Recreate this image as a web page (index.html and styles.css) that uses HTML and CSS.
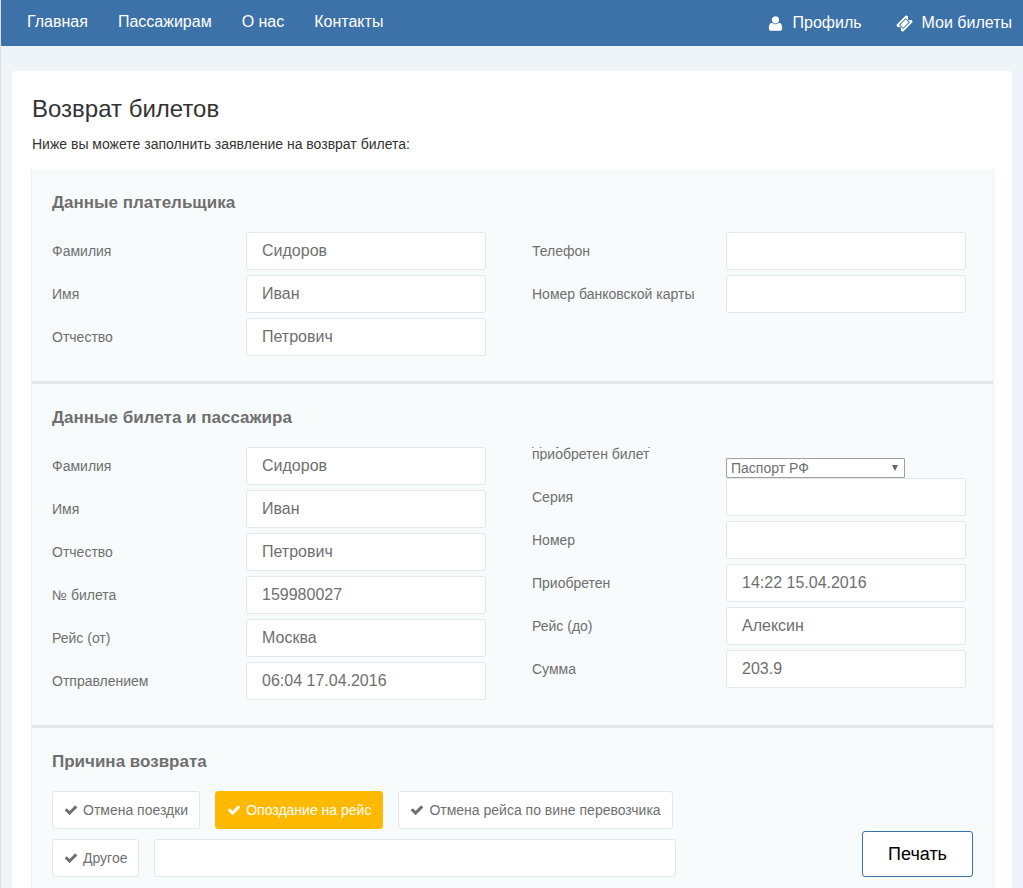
FILE: index.html
```html
<!DOCTYPE html>
<html lang="ru">
<head>
    <meta charset="UTF-8">
    <title>Возврат билетов</title>
    <link rel="stylesheet" href="styles.css">
</head>
<body>
    <!-- Иконки -->
    <svg class="sprite" aria-hidden="true">
        <symbol id="icon-check" viewBox="0 0 1792 1792">
            <path d="M1671 566q0 40-28 68l-724 724-136 136q-28 28-68 28t-68-28l-136-136-362-362q-28-28-28-68t28-68l136-136q28-28 68-28t68 28l294 295 656-657q28-28 68-28t68 28l136 136q28 28 28 68z"/>
        </symbol>
        <symbol id="icon-user" viewBox="0 0 1792 1792">
            <path d="M1600 1405q0 120-73 189.500t-194 69.500h-874q-121 0-194-69.500t-73-189.500q0-53 3.500-103.500t14-109 26.500-108.500 43-97.500 62-81 85.500-53.500 111.500-20q9 0 42 21.500t74.500 48 108 48 133.500 21.500 133.500-21.500 108-48 74.500-48 42-21.500q61 0 111.500 20t85.500 53.500 62 81 43 97.500 26.500 108.500 14 109 3.500 103.500zm-320-893q0 159-112.500 271.500t-271.500 112.500-271.500-112.500-112.500-271.500 112.500-271.500 271.500-112.500 271.500 112.500 112.500 271.500z"/>
        </symbol>
        <symbol id="icon-ticket" viewBox="0 0 1792 1792">
            <path d="M1024 452l316 316-572 572-316-316zm-211 979l618-618q19-19 19-45t-19-45l-362-362q-18-18-45-18t-45 18l-618 618q-19 19-19 45t19 45l362 362q18 18 45 18t45-18zm889-637l-907 908q-37 37-90.5 37t-90.5-37l-126-126q56-56 56-136t-56-136-136-56-136 56l-125-126q-37-37-37-90.5t37-90.500l907-906q37-37 90.500-37t90.500 37l125 125q-56 56-56 136t56 136 136 56 136-56l126 125q37 37 37 90.500t-37 90.500z"/>
        </symbol>
    </svg>

    <!-- Шапка -->
    <header class="header">
        <nav class="menu">
            <a href="#">Главная</a>
            <a href="#">Пассажирам</a>
            <a href="#">О нас</a>
            <a href="#">Контакты</a>
        </nav>
        <nav class="user-menu">
            <a href="#"><svg class="icon"><use href="#icon-user"/></svg>Профиль</a>
            <a href="#"><svg class="icon"><use href="#icon-ticket"/></svg>Мои билеты</a>
        </nav>
    </header>

    <main class="card">
        <h1>Возврат билетов</h1>
        <p class="hint">Ниже вы можете заполнить заявление на возврат билета:</p>

        <form class="panel">
            <!-- Плательщик -->
            <section class="section">
                <h2>Данные плательщика</h2>
                <div class="fields">
                    <div class="column">
                        <div class="row"><label for="payerSurname">Фамилия</label><input type="text" id="payerSurname" value="Сидоров"></div>
                        <div class="row"><label for="payerName">Имя</label><input type="text" id="payerName" value="Иван"></div>
                        <div class="row"><label for="payerPatronymic">Отчество</label><input type="text" id="payerPatronymic" value="Петрович"></div>
                    </div>
                    <div class="column">
                        <div class="row"><label for="phone">Телефон</label><input type="text" id="phone"></div>
                        <div class="row"><label for="bankCard">Номер банковской карты</label><input type="text" id="bankCard"></div>
                    </div>
                </div>
            </section>

            <!-- Билет и пассажир -->
            <section class="section">
                <h2>Данные билета и пассажира</h2>
                <div class="fields">
                    <div class="column">
                        <div class="row"><label for="surname">Фамилия</label><input type="text" id="surname" value="Сидоров"></div>
                        <div class="row"><label for="name">Имя</label><input type="text" id="name" value="Иван"></div>
                        <div class="row"><label for="patronymic">Отчество</label><input type="text" id="patronymic" value="Петрович"></div>
                        <div class="row"><label for="ticket">№ билета</label><input type="text" id="ticket" value="159980027"></div>
                        <div class="row"><label for="from">Рейс (от)</label><input type="text" id="from" value="Москва"></div>
                        <div class="row"><label for="departure">Отправлением</label><input type="text" id="departure" value="06:04 17.04.2016"></div>
                    </div>
                    <div class="column">
                        <div class="row row-select">
                            <label for="document">Документ, на который<br>приобретен билет</label>
                            <div class="select">
                                <select id="document">
                                    <option>Паспорт РФ</option>
                                </select>
                            </div>
                        </div>
                        <div class="row"><label for="series">Серия</label><input type="text" id="series"></div>
                        <div class="row"><label for="number">Номер</label><input type="text" id="number"></div>
                        <div class="row"><label for="bought">Приобретен</label><input type="text" id="bought" value="14:22 15.04.2016"></div>
                        <div class="row"><label for="to">Рейс (до)</label><input type="text" id="to" value="Алексин"></div>
                        <div class="row"><label for="sum">Сумма</label><input type="text" id="sum" value="203.9"></div>
                    </div>
                </div>
            </section>

            <!-- Причина -->
            <section class="section">
                <h2>Причина возврата</h2>
                <div class="bottom">
                    <div class="reasons">
                        <div class="reasons-row">
                            <button type="button" class="reason"><svg class="check"><use href="#icon-check"/></svg>Отмена поездки</button>
                            <button type="button" class="reason active"><svg class="check"><use href="#icon-check"/></svg>Опоздание на рейс</button>
                            <button type="button" class="reason"><svg class="check"><use href="#icon-check"/></svg>Отмена рейса по вине перевозчика</button>
                        </div>
                        <div class="reasons-row">
                            <button type="button" class="reason"><svg class="check"><use href="#icon-check"/></svg>Другое</button>
                            <input type="text" class="other" aria-label="Другая причина">
                        </div>
                    </div>
                    <button type="submit" class="print">Печать</button>
                </div>
            </section>
        </form>
    </main>

    <script>
        // Выбор причины возврата
        const reasons = document.querySelectorAll('.reason');
        reasons.forEach(btn => {
            btn.addEventListener('click', () => {
                reasons.forEach(item => item.classList.remove('active'));
                btn.classList.add('active');
            });
        });
    </script>
</body>
</html>
```
FILE: styles.css
```css
* {
    box-sizing: border-box;
}

body {
    margin: 0;
    min-height: 100vh;
    border-left: 1px solid #dcdfe2;
    background: #eef4f8;
    font-family: "Liberation Sans", Arial, sans-serif;
    font-size: 14px;
    color: #333;
}

.sprite {
    display: none;
}

/* Шапка */
.header {
    display: flex;
    justify-content: space-between;
    height: 46px;
    padding: 0 11px 0 26px;
    background: #3d72a8;
    font-size: 16px;
}

.header a {
    color: #fff;
    text-decoration: none;
}

.menu,
.user-menu {
    display: flex;
    gap: 30px;
    line-height: 44px;
}

.user-menu {
    gap: 34px;
    line-height: 48px;
}

.user-menu a {
    display: flex;
    align-items: center;
    gap: 9px;
}

.icon {
    width: 17px;
    height: 17px;
    fill: #fff;
}

/* Карточка с заявлением */
.card {
    margin: 25px 11px 0;
    padding: 20px 18px 0 19px;
    border-radius: 3px;
    background: #fff;
}

h1 {
    margin: 0 1px;
    font-size: 24px;
    font-weight: normal;
    line-height: 36px;
}

.hint {
    margin: 7px 1px 15px;
    line-height: 20px;
}

.panel {
    border: 1px solid #edf1f3;
    border-width: 0 1px;
    background: #f7fbfc;
    color: #6f6f6f;
}

.section {
    padding: 24px 20px 25px;
}

.section + .section {
    border-top: 3px solid #e1e7ea;
}

h2 {
    margin: 0 0 19px;
    font-size: 17px;
    line-height: 20px;
}

.fields {
    display: grid;
    grid-template-columns: 1fr 1fr;
    gap: 46px;
    padding-right: 7px;
}

.column {
    display: flex;
    flex-direction: column;
    gap: 5px;
}

.row {
    display: flex;
    align-items: center;
}

.row label {
    flex: 0 0 194px;
}

input {
    flex: 1;
    min-width: 0;
    height: 38px;
    padding: 0 15px;
    border: 1px solid #e1e7ea;
    border-radius: 3px;
    background: #fff;
    font-family: inherit;
    font-size: 16px;
    color: #6f6f6f;
}

/* Строка со списком документов */
.row-select {
    align-items: flex-start;
    margin-bottom: -5px;
}

.row-select label {
    display: flex;
    align-items: flex-end;
    height: 14px;
    line-height: 14px;
    overflow: hidden;
}

.select {
    position: relative;
    width: 179px;
    margin-top: 11px;
}

.select::after {
    content: "";
    position: absolute;
    top: 7px;
    right: 7px;
    border: 3px solid transparent;
    border-top: 6px solid #666;
    border-bottom: 0;
    pointer-events: none;
}

select {
    display: block;
    appearance: none;
    width: 100%;
    height: 20px;
    padding: 0 4px;
    border: 1px solid #a0a0a0;
    border-radius: 1px;
    background: #fff;
    font-family: inherit;
    font-size: 14px;
    color: #6f6f6f;
}

/* Причины и печать */
.bottom {
    display: flex;
    justify-content: space-between;
    align-items: flex-end;
    gap: 20px;
}

.reasons {
    display: flex;
    flex: 1;
    flex-direction: column;
    gap: 10px;
}

.reasons-row {
    display: flex;
    gap: 15px;
}

button {
    border-radius: 3px;
    background: #fff;
    font-family: inherit;
    cursor: pointer;
}

.reason {
    display: flex;
    align-items: center;
    gap: 5px;
    height: 38px;
    padding: 0 11px;
    border: 1px solid #e1e7ea;
    font-size: 14px;
    color: #6f6f6f;
    white-space: nowrap;
}

.reason.active {
    border-color: #ffb900;
    background: #ffb900;
    color: #fff;
}

.check {
    width: 14px;
    height: 14px;
    fill: currentColor;
}

.other {
    max-width: 522px;
}

.print {
    height: 46px;
    padding: 0 25px;
    border: 1px solid #3d72a8;
    font-size: 18px;
    color: #000;
}
```
